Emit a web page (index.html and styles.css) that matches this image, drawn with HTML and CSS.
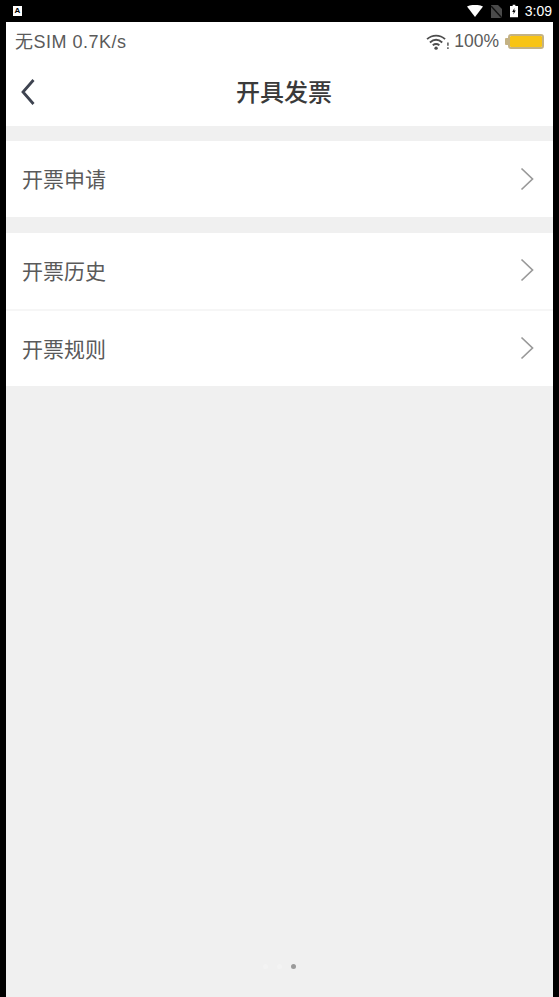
FILE: index.html
```html
<!DOCTYPE html>
<html lang="zh-CN">
<head>
  <meta charset="UTF-8" />
  <title>开具发票</title>
  <link rel="stylesheet" href="styles.css">
</head>
<body>
  <div class="system-bar">
    <span class="app-badge">A</span>
    <div class="system-icons">
      <svg class="sys-wifi" width="16" height="12" viewBox="0 0 16 12"><path d="M0 1.500C4.500-.7 11.500-.7 16 1.500L8 12z" fill="#fff"/></svg>
      <svg class="sys-sim" width="11" height="13" viewBox="0 0 11 13"><path d="M0 0h7l4 4v9H0z" fill="#4a4a4a"/><path d="M0 1l11 12" stroke="#111" stroke-width="1.500"/></svg>
      <svg class="sys-batt" width="8" height="14" viewBox="0 0 9 14"><path d="M3 0h3v1.500h3V14H0V1.500h3z" fill="#fff"/><path d="M5 3.500 2.500 8h1.700L3.700 11 6.500 6.500H4.800z" fill="#000"/></svg>
      <span class="sys-time">3:09</span>
    </div>
  </div>

  <div class="screen">
    <div class="app-header">
      <div class="status-bar">
        <span class="net-text">无SIM 0.7K/s</span>
        <div class="status-right">
          <svg width="23" height="18" viewBox="0 0 24 19" fill="none" stroke="#4d4d4d" stroke-width="2">
            <path d="M1 6.500C6.500 1.500 14.500 1.500 20 6.500"/>
            <path d="M4 10C8 6.500 13 6.500 17 10"/>
            <path d="M7 13C9 11.500 12 11.500 14 13"/>
            <circle cx="10.500" cy="16" r="1.800" fill="#4d4d4d" stroke="none"/>
            <path d="M23 10v3.500M23 15v2" stroke-width="1.500"/>
          </svg>
          <span>100%</span>
          <div class="battery"><div class="battery-level"></div></div>
        </div>
      </div>
      <div class="title-bar">
        <svg class="back" width="16" height="28" viewBox="0 0 16 28" fill="none" stroke="#3e4350" stroke-width="2.800"><path d="M13.500 2 3 14l10.500 12"/></svg>
        <h1>开具发票</h1>
      </div>
    </div>

    <div class="group">
      <div class="row"><span>开票申请</span><svg class="chevron" width="14" height="24" viewBox="0 0 14 24" fill="none" stroke="#999" stroke-width="1.700"><path d="M1.500 1.500 12.500 12 1.500 22.500"/></svg></div>
    </div>
    <div class="group">
      <div class="row"><span>开票历史</span><svg class="chevron" width="14" height="24" viewBox="0 0 14 24" fill="none" stroke="#999" stroke-width="1.700"><path d="M1.500 1.500 12.500 12 1.500 22.500"/></svg></div>
      <div class="row"><span>开票规则</span><svg class="chevron" width="14" height="24" viewBox="0 0 14 24" fill="none" stroke="#999" stroke-width="1.700"><path d="M1.500 1.500 12.500 12 1.500 22.500"/></svg></div>
    </div>

    <div class="pager"><i></i><i></i><i class="on"></i></div>
  </div>
</body>
</html>
```

FILE: styles.css
```css
* {
  box-sizing: border-box;
}

html,
body {
  height: 100%;
}

body {
  margin: 0;
  background: #000;
  font-family: "Liberation Sans", "Noto Sans CJK SC", sans-serif;
  display: flex;
  flex-direction: column;
  overflow: hidden;
}

.system-bar {
  height: 22px;
  flex: none;
  display: flex;
  align-items: center;
  justify-content: space-between;
  padding: 0 7px 0 13px;
}

.app-badge {
  width: 9px;
  height: 10px;
  background: #fff;
  color: #000;
  font-size: 8px;
  font-weight: bold;
  line-height: 10px;
  text-align: center;
}

.system-icons {
  display: flex;
  align-items: center;
  gap: 8px;
}

.sys-time {
  color: #fff;
  font-size: 14px;
  margin-left: -1px;
}

.screen {
  flex: 1;
  margin: 0 6px;
  background: #f0f0f0;
  position: relative;
}

.app-header {
  height: 104px;
  background: #fff;
  margin-bottom: 15px;
}

.status-bar {
  height: 38px;
  padding: 0 9px 3px;
  display: flex;
  align-items: center;
  justify-content: space-between;
  color: #5a5a5a;
  font-size: 18px;
}

.net-text {
  letter-spacing: 0.5px;
}

.status-right {
  display: flex;
  align-items: center;
  gap: 5px;
  padding-top: 3px;
  margin-top: 1px;
}

.status-right span {
  font-size: 17.500px;
}

.battery {
  width: 36px;
  height: 15px;
  border: 2px solid #c4b283;
  border-radius: 3px;
  margin-left: 4px;
  position: relative;
}

.battery::before {
  content: "";
  position: absolute;
  left: -5px;
  top: 2px;
  width: 3px;
  height: 7px;
  background: #c4b283;
  border-radius: 1px 0 0 1px;
}

.battery-level {
  height: 100%;
  background: #f8c414;
  border-radius: 1px;
}

.title-bar {
  height: 66px;
  position: relative;
  display: flex;
  align-items: center;
  justify-content: center;
  padding: 0 0 6px 9px;
}

.title-bar h1 {
  margin: 0;
  font-size: 24px;
  font-weight: 500;
  color: #3a3a3a;
}

.back {
  position: absolute;
  left: 14px;
  top: 18px;
}

.group {
  background: #fff;
  margin-bottom: 16px;
}

.row {
  height: 76px;
  padding: 0 19px 2px 16px;
  display: flex;
  align-items: center;
  justify-content: space-between;
  font-size: 21px;
  color: #5a5a5a;
}

.chevron {
  position: relative;
  top: 1px;
}

.group + .group .chevron {
  top: 0;
}

.row + .row {
  height: 77px;
  border-top: 2px solid #f6f6f6;
}

.pager {
  position: absolute;
  left: 257px;
  bottom: 28px;
  display: flex;
  gap: 9px;
}

.pager i {
  display: block;
  width: 5px;
  height: 5px;
  border-radius: 50%;
  background: #f3f3f3;
}

.pager .on {
  background: #9a9a9a;
}
```
